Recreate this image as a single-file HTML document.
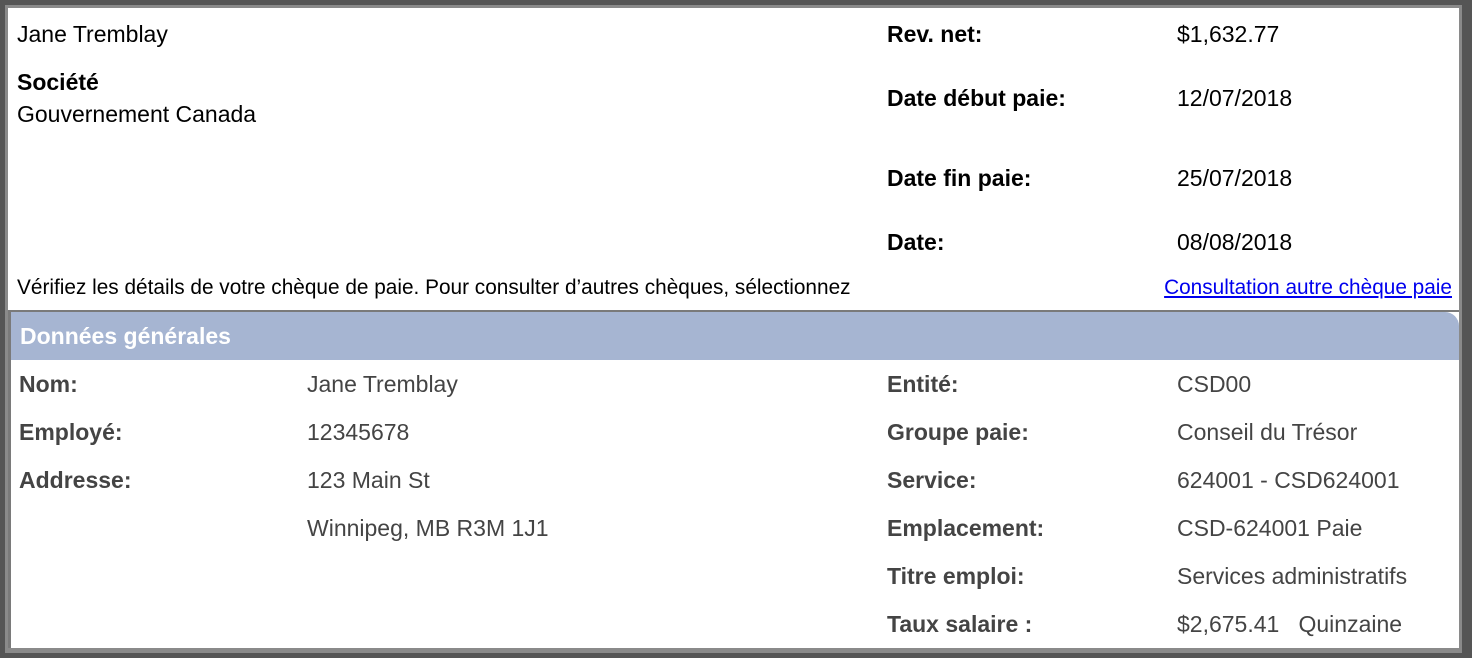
<!DOCTYPE html>
<html><head><meta charset="utf-8"><style>
*{margin:0;padding:0;box-sizing:border-box}
body{width:1472px;height:658px;background:#555;font-family:"Liberation Sans",Arial,sans-serif;position:relative;overflow:hidden}
.frame{position:absolute;left:5px;top:5px;width:1457px;height:648px;background:#8a8a8a}
.inner{position:absolute;left:8px;top:8px;width:1451px;height:640px;background:#fff}
.t{position:absolute;font-size:23px;color:#000;white-space:nowrap;line-height:24px}
.b{font-weight:bold}
.s{font-size:20.8px}
.sec{position:absolute;left:8px;top:310px;width:1451px;height:338px;border-top:2px solid #7a7a7a;border-left:3px solid #7a7a7a}
.hdr{position:absolute;left:0;top:0;right:0;height:48px;background:#a6b5d2;border-top-right-radius:14px;color:#fff;font-weight:bold;font-size:23px;padding:12px 0 0 9px;line-height:24px}
.d{position:absolute;font-size:23px;color:#444;white-space:nowrap;line-height:24px}
a{color:#0000ee}
</style></head><body>
<div class="frame"></div>
<div class="inner"></div>
<div class="t" style="left:17px;top:22px">Jane Tremblay</div>
<div class="t b" style="left:17px;top:70px">Société</div>
<div class="t" style="left:17px;top:102px">Gouvernement Canada</div>
<div class="t b" style="left:887px;top:22px">Rev. net:</div>
<div class="t" style="left:1177px;top:22px">$1,632.77</div>
<div class="t b" style="left:887px;top:86px">Date début paie:</div>
<div class="t" style="left:1177px;top:86px">12/07/2018</div>
<div class="t b" style="left:887px;top:166px">Date fin paie:</div>
<div class="t" style="left:1177px;top:166px">25/07/2018</div>
<div class="t b" style="left:887px;top:230px">Date:</div>
<div class="t" style="left:1177px;top:230px">08/08/2018</div>
<div class="t s" style="left:17px;top:276px">Vérifiez les détails de votre chèque de paie. Pour consulter d’autres chèques, sélectionnez</div>
<div class="t s" style="right:20px;top:276px"><a href="#">Consultation autre chèque paie</a></div>
<div class="sec"><div class="hdr">Données générales</div></div>
<div class="d b" style="left:19px;top:372px">Nom:</div>
<div class="d" style="left:307px;top:372px">Jane Tremblay</div>
<div class="d b" style="left:19px;top:420px">Employé:</div>
<div class="d" style="left:307px;top:420px">12345678</div>
<div class="d b" style="left:19px;top:468px">Addresse:</div>
<div class="d" style="left:307px;top:468px">123 Main St</div>
<div class="d" style="left:307px;top:516px">Winnipeg, MB R3M 1J1</div>
<div class="d b" style="left:887px;top:372px">Entité:</div>
<div class="d" style="left:1177px;top:372px">CSD00</div>
<div class="d b" style="left:887px;top:420px">Groupe paie:</div>
<div class="d" style="left:1177px;top:420px">Conseil du Trésor</div>
<div class="d b" style="left:887px;top:468px">Service:</div>
<div class="d" style="left:1177px;top:468px">624001 - CSD624001</div>
<div class="d b" style="left:887px;top:516px">Emplacement:</div>
<div class="d" style="left:1177px;top:516px">CSD-624001 Paie</div>
<div class="d b" style="left:887px;top:564px">Titre emploi:</div>
<div class="d" style="left:1177px;top:564px">Services administratifs</div>
<div class="d b" style="left:887px;top:612px">Taux salaire :</div>
<div class="d" style="left:1177px;top:612px">$2,675.41&nbsp;&nbsp;&nbsp;Quinzaine</div>
</body></html>
